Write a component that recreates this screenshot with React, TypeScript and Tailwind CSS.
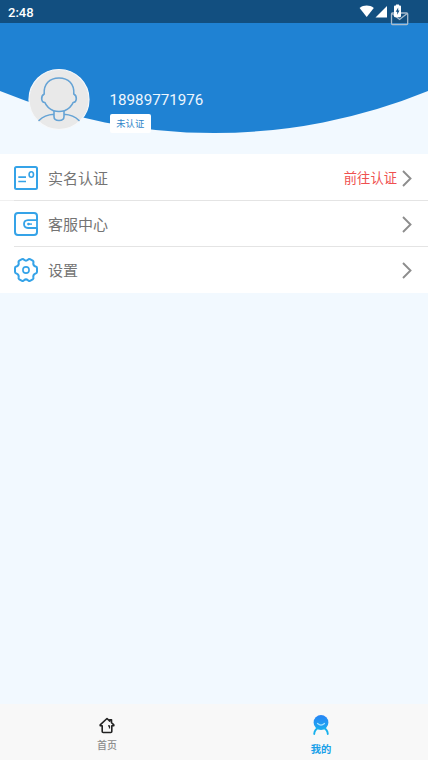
import React from "react";

const cjk = "font-['Noto_Sans_CJK_SC',sans-serif]";

function StatusBar() {
  return (
    <div className="relative z-10 flex h-[23px] items-center justify-between bg-[#124f80] pl-[8px]">
      <span className="pt-[2px] font-['Roboto',sans-serif] text-[13px] font-medium leading-none text-white">2:48</span>
      <svg className="absolute left-[356px] top-0" width="60" height="28" viewBox="0 0 60 28">
        <path d="M3.600 8C7.800 4.800 13.600 4.800 17.800 8L10.700 17Z" fill="#fff" />
        <path d="M31 6V17.600H19.500Z" fill="#fff" />
        <rect x="35.500" y="13" width="16.200" height="11.500" rx="1" fill="none" stroke="#a9bccd" strokeWidth="1.300" />
        <path d="M36 13.500L43.600 19.500L51.200 13.500" fill="none" stroke="#a9bccd" strokeWidth="1.300" />
        <path d="M39 5.500H40V4.500h3v1H44q1 0 1 1V16q0 1.200-1.200 1.200h-4.600q-1.200 0-1.200-1.200V6.500Q38 5.500 39 5.500Z" fill="#fff" />
        <path d="M42.200 7.500L39.700 11.800h1.500V14.800L43.500 10.600H42.200Z" fill="#124f80" />
      </svg>
    </div>
  );
}

function Avatar() {
  return (
    <svg className="h-[62px] w-[62px] shrink-0" viewBox="0 0 62 62">
      <circle cx="31" cy="31.500" r="30" fill="#e9e9e9" stroke="#f6f8fa" strokeWidth="1.200" />
      <g fill="none" stroke="#65a3d5" strokeWidth="1.600" strokeLinecap="round" strokeLinejoin="round">
        <path d="M25.500 42.800C20.500 40.300 18 37.500 16.900 34.500C13 34.500 12.500 28 16.200 26C15.500 16 21.500 10 31 10S46.500 16 45.800 26C49.500 28 49 34.500 45.100 34.500C44 37.500 41.500 40.300 36.500 42.800Q31 44.300 25.500 42.800Z" />
        <path d="M26 43V48.500Q26 52.500 31 52.500T36 48.500V43M26 46.200C19.500 46.600 14.500 48.700 11 52.500M36 46.200C42.500 46.600 47.500 48.700 51 52.500" />
      </g>
    </svg>
  );
}

function CertIcon() {
  return (
    <svg width="24" height="24" viewBox="0 0 24 24" fill="none" stroke="#35a3e8" strokeWidth="2">
      <rect x="1" y="1" width="22" height="22" rx="1.500" />
      <path d="M4.300 11.200h7.700M4.300 15.500h7.700" strokeWidth="1.700" />
      <ellipse cx="17.300" cy="8.500" rx="2.200" ry="2.800" strokeWidth="1.600" />
    </svg>
  );
}

function WalletIcon() {
  return (
    <svg width="24" height="24" viewBox="0 0 24 24" fill="none" stroke="#35a3e8" strokeWidth="2">
      <path d="M23 8.200V4Q23 1 20 1H4Q1 1 1 4V20Q1 23 4 23H20Q23 23 23 20V16" />
      <path d="M23 8.200H14Q10 8.400 10 12.100T14 16H23Z" strokeWidth="1.800" />
      <path d="M13.800 12.100H18" strokeWidth="1.400" />
      <circle cx="14.500" cy="12.100" r="1.300" fill="#35a3e8" stroke="none" />
    </svg>
  );
}

function GearIcon() {
  return (
    <svg width="24" height="24" viewBox="0 0.500 24 24" fill="none" stroke="#35a3e8" strokeWidth="2" strokeLinejoin="round">
      <path d="M8 1.700Q9.300 1.200 10 2.300Q12 4 14 2.300Q14.700 1.200 16 1.700L18.700 3.200Q19.900 4 19.300 5.300Q19 8.200 21.700 9.100Q23 9.300 23 10.500V14.500Q23 15.700 21.700 15.900Q19 16.800 19.300 19.700Q19.900 21 18.700 21.800L16 23.300Q14.700 23.800 14 22.700Q12 21 10 22.700Q9.300 23.800 8 23.300L5.300 21.800Q4.100 21 4.700 19.700Q5 16.800 2.300 15.900Q1 15.700 1 14.500V10.500Q1 9.300 2.300 9.100Q5 8.200 4.700 5.300Q4.100 4 5.300 3.200Z" />
      <circle cx="12" cy="12.500" r="3.100" strokeWidth="1.600" />
    </svg>
  );
}

function Chevron() {
  return (
    <svg width="10" height="17" viewBox="0 0 10 17" fill="none" stroke="#8d8d8d" strokeWidth="1.900">
      <path d="M1 1L8.500 8.500L1 16" />
    </svg>
  );
}

interface RowProps {
  icon: React.ReactNode;
  label: string;
  action?: string;
}

function Row({ icon, label, action }: RowProps) {
  return (
    <div className="flex h-[46px] items-center pl-[14px] pr-[16px]">
      <span className="w-[34px]">{icon}</span>
      <span className="flex-1 pb-[2px] text-[15px] leading-none text-[#747474]">{label}</span>
      {action && <span className="mr-[5px] text-[13.300px] leading-none text-[#ef5050]">{action}</span>}
      <Chevron />
    </div>
  );
}

export default function App() {
  return (
    <div className={`flex h-[760px] w-[428px] flex-col overflow-hidden bg-[#f2f9ff] ${cjk}`}>
      <StatusBar />
      <header className="relative h-[131px]">
        <svg className="absolute inset-0" width="428" height="131" viewBox="0 0 428 131">
          <path d="M0 0H428V68A566 566 0 0 1 0 68Z" fill="#1f82d3" />
        </svg>
        <div className="relative flex pl-[28px] pt-[45px]">
          <Avatar />
          <div className="flex flex-col items-start pl-[19.500px] pt-[24px]">
            <span className="font-['Roboto',sans-serif] text-[15.200px] leading-[16px] text-[#eef6fd]">18989771976</span>
            <span className="mt-[6px] flex h-[19px] w-[41.500px] items-center justify-center rounded-[2px] bg-white text-[9.300px] leading-none text-[#3186c9]">未认证</span>
          </div>
        </div>
      </header>
      <main className="flex-1">
        <div className="h-[139px] bg-white">
          <div className="pt-px"><Row icon={<CertIcon />} label="实名认证" action="前往认证" /></div>
          <div className="-mt-px h-px bg-[#f0f0f0] pl-[14px]"><div className="h-px bg-[#e4e4e4]" /></div>
          <Row icon={<WalletIcon />} label="客服中心" />
          <div className="-mt-px ml-[14px] h-px bg-[#e4e4e4]" />
          <Row icon={<GearIcon />} label="设置" />
        </div>
      </main>
      <nav className="grid h-[56px] grid-cols-2 bg-[#f8f8f8]">
        <div className="flex flex-col items-center pt-[13px]">
          <svg width="16" height="17" viewBox="0 0 16 17" fill="none" stroke="#222" strokeWidth="1.600" strokeLinejoin="round">
            <path d="M8 1.500L1.200 7.800V8.800H3.200V14.500Q3.200 15.500 4.200 15.500H11.800Q12.800 15.500 12.800 14.500V8.800H14.800V7.800L12.500 5.700V2.700H10.800V4.100Z" />
            <path d="M9 8.800h1.500v2.800" strokeWidth="1.200" />
          </svg>
          <span className="mt-[6px] text-[10px] font-medium leading-none text-[#8c8c8c]">首页</span>
        </div>
        <div className="flex flex-col items-center pt-[11px]">
          <svg width="18" height="20" viewBox="0 0 18 20" fill="none">
            <defs>
              <linearGradient id="person" x1="1" y1="1" x2="1" y2="19" gradientUnits="userSpaceOnUse">
                <stop stopColor="#2787f5" />
                <stop offset="1" stopColor="#18b6ed" />
              </linearGradient>
            </defs>
            <circle cx="9" cy="7.500" r="7.400" fill="url(#person)" />
            <path d="M2.200 19Q2.600 14.700 6 13.200M15.800 19Q15.400 14.700 12 13.200" stroke="#18b1ed" strokeWidth="1.900" strokeLinecap="round" />
            <path d="M5.500 8.500Q9 11.600 12.500 8.500" stroke="#a6e1ff" strokeWidth="1.200" strokeLinecap="round" />
          </svg>
          <span className="mt-[9px] text-[10.300px] font-bold leading-none text-[#18a0e8]">我的</span>
        </div>
      </nav>
    </div>
  );
}
